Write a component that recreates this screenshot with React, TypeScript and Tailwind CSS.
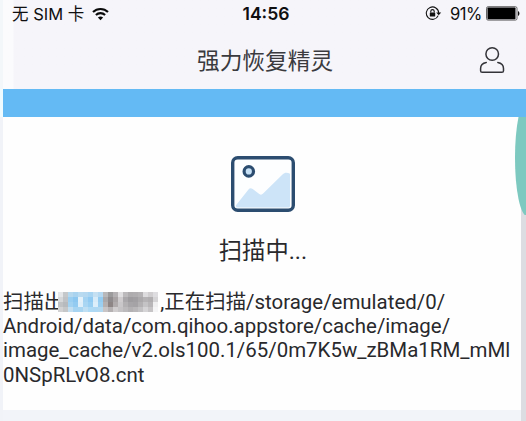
const MOSAIC = [
  ["#e4e6e8", "#c5c8ca", "#b5d8ee", "#a9d3ef", "#b8daf0", "#b5d8f0", "#a9d5f2", "#c5e0f2", "#b5d9f2", "#b8b8ba", "#9c9b9c", "#b4b1b3", "#e0dfe1", "#bcbabc", "#aeacae", "#b0aeb0", "#b5b3b5", "#dddcde", "#d0ced0", "#dedde0"],
  ["#d5d7d9", "#bfc2c5", "#99cef1", "#8cc7f0", "#e3f1fa", "#a4d3f2", "#90caf2", "#d7ebf8", "#94ccf1", "#aaa8aa", "#8f8b8d", "#a8a3a4", "#cfccce", "#aaa8ab", "#9e9c9f", "#a19fa2", "#aba9ab", "#b5b3b5", "#b0aeb0", "#d5d4d6"],
  ["#c0c2c4", "#b7babd", "#a2d2f1", "#93cbf1", "#deeffa", "#a9d6f3", "#99cff2", "#dceefa", "#9bcff1", "#b5b0b0", "#8d8585", "#b0abac", "#c9c7c9", "#b3b1b3", "#a7a5a8", "#a5a3a6", "#b3b1b3", "#c4c3c5", "#b8b6b8", "#efeff0"],
  ["#d2d2d3", "#c5c7c8", "#c3dff1", "#a7d4f1", "#a8d5f1", "#bfdff3", "#addaf5", "#aed8f3", "#b2d8ef", "#c8c4c5", "#b5b1b2", "#d0cdce", "#c5c3c5", "#bcbabc", "#b3b1b3", "#b9b7b9", "#c2c1c3", "#d5d4d6", "#c6c4c6", "#f5f5f6"],
];

function WifiIcon() {
  return (
    <svg className="ml-[8px] h-[14px] w-[17px]" viewBox="0 0 17 14" fill="none" stroke="#0a0a0a" strokeWidth="2.1">
      <path d="M1 5.1a10.6 10.6 0 0 1 15 0" />
      <path d="M3.9 8a6.6 6.6 0 0 1 9.2 0" />
      <path d="M8.5 13.2 5.9 10.6a3.8 3.8 0 0 1 5.2 0z" fill="#0a0a0a" stroke="none" />
    </svg>
  );
}

function RotationLockIcon() {
  return (
    <svg className="h-[15px] w-[17px]" viewBox="0 0 17 15" fill="none">
      <path d="M13.2 9.6a6.2 6.2 0 1 1 .5-2.6" stroke="#111" strokeWidth="1.1" />
      <path d="M11.2 6.4h5l-2.5 2.9z" fill="#111" />
      <rect x="4.8" y="6.4" width="5.4" height="4.1" rx=".5" fill="#111" />
      <path d="M5.8 6.6V5.3a1.7 1.7 0 0 1 3.4 0v1.3" stroke="#111" strokeWidth="1.1" />
    </svg>
  );
}

function BatteryIcon() {
  return (
    <svg className="ml-1 h-[15px] w-[34px]" viewBox="0 0 34 15">
      <rect x=".5" y=".7" width="30.5" height="13.4" rx="1.6" fill="none" stroke="#555" strokeWidth=".9" />
      <rect x="1.5" y="1.6" width="28" height="11.6" rx=".6" fill="#000" />
      <path d="M32 4.9c1.9.7 1.9 4.3 0 5z" fill="#111" />
    </svg>
  );
}

function UserIcon() {
  return (
    <svg className="h-[28px] w-[26px]" viewBox="0 0 26 28" fill="none" stroke="#333338" strokeWidth="1.5" strokeLinecap="round">
      <circle cx="13.2" cy="8" r="6.3" />
      <path d="M7.3 16.4C3.6 17 1.6 19.2 1.6 22.5v2.2c0 1 .6 1.6 1.6 1.6h19.7c1 0 1.6-.6 1.6-1.6v-2.2c0-3.3-2-5.5-5.7-6.1" />
    </svg>
  );
}

function PictureIcon() {
  return (
    <svg className="h-[56px] w-[64px]" viewBox="0 0 64 56" fill="none">
      <rect x="1.7" y="1.7" width="60.6" height="52.6" rx="5" fill="#fdfeff" stroke="#2c4d70" strokeWidth="3.4" />
      <path d="M4.8 49.5 17.5 33.4c1.2-1.5 2.7-1.6 4.2-.3l6.6 4.9c1.4 1 2.5.9 3.8-.4L51.5 18.4c2.2-2.2 5-2.2 7.5-.6V50a1.5 1.5 0 0 1-1.5 1.5H5.5z" fill="#cde4f8" />
      <circle cx="17.8" cy="15.4" r="4.7" fill="#c7e1f6" stroke="#2c4d70" strokeWidth="3.2" />
    </svg>
  );
}

function HiddenCount() {
  return (
    <span className="relative -ml-[6px] mr-[2px] grid h-5 w-[100px] shrink-0 grid-cols-[repeat(20,5px)] grid-rows-4">
      {MOSAIC.flat().map((color, i) => (
        <span key={i} style={{ backgroundColor: color }} />
      ))}
    </span>
  );
}

export default function App() {
  return (
    <div className="relative flex h-[421px] w-[526px] flex-col overflow-hidden bg-[#fefefe] font-['Roboto','Noto_Sans_CJK_SC',sans-serif] text-[#29292c]">
      <header className="flex h-[89px] flex-col border-l-[3px] border-[#f3f7fa] bg-linear-to-r from-[#fbfbfd] from-[10px] to-[#f6f5fa] to-[11px]">
        <div className="grid h-7 grid-cols-[1fr_auto_1fr] items-center pl-[9px] pr-[6px] font-['Inter','Noto_Sans_CJK_SC',sans-serif] text-[#0f0f10]">
          <div className="flex items-center whitespace-nowrap text-[16.5px]">
            <span>无 SIM 卡</span>
            <WifiIcon />
          </div>
          <span className="text-[17.6px] font-semibold">14:56</span>
          <div className="flex items-center justify-end">
            <RotationLockIcon />
            <span className="ml-2 text-[16.6px] tracking-tight">91%</span>
            <BatteryIcon />
          </div>
        </div>
        <div className="flex flex-1 items-center pl-[194px] pr-[21px] pt-0.5">
          <h1 className="pt-1.5 text-[22.7px] leading-none text-[#3a3a3e]">强力恢复精灵</h1>
          <div className="ml-auto">
            <UserIcon />
          </div>
        </div>
      </header>

      <div className="h-7 border-l-[3px] border-[#effbff] bg-[#64baf4]" />

      <main className="flex h-[293px] flex-col border-l-[3px] border-r-[5px] border-l-[#f1f3f8] border-r-[#dcdde2]">
        <div className="flex flex-col items-center pl-0.5 pt-[39px]">
          <PictureIcon />
          <p className="mt-[25px] text-[23.3px] leading-7">扫描中...</p>
        </div>
        <div className="mt-[25px] whitespace-nowrap text-[20.45px] leading-[24.2px]">
          <p className="flex items-center">
            扫描出
            <HiddenCount />
            ,正在扫描/storage/emulated/0/
          </p>
          <p>Android/data/com.qihoo.appstore/cache/image/</p>
          <p>image_cache/v2.ols100.1/65/0m7K5w_zBMa1RM_mMl</p>
          <p>0NSpRLvO8.cnt</p>
        </div>
      </main>
      <footer className="h-[11px] border-l-[3px] border-r-[5px] border-l-[#f1f3f8] border-r-[#dcdde2] bg-[#f2f4f9]" />

      {/* edge handle, mostly off screen */}
      <div className="absolute left-[515px] top-[117px] h-[98px] w-[11px] overflow-hidden">
        <div className="-mt-[17px] h-[116px] w-[24px] rounded-[50%] bg-[#7dc9c0]" />
      </div>
    </div>
  );
}
